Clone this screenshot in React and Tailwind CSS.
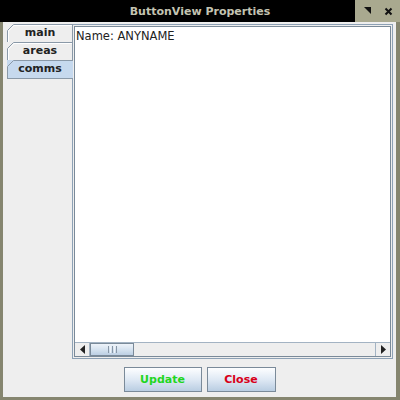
import React from "react";

const font = { fontFamily: '"DejaVu Sans", "Liberation Sans", sans-serif' };

function Tab({ label, selected, last }) {
  return (
    <div className={`relative h-[18px] w-[66px] ${selected ? "bg-[#c6d9ee]" : "bg-[#eeeeee]"}`}>
      <svg className="absolute inset-0" width="66" height="19" viewBox="0 0 66 19">
        {!selected && (
          <path d="M1.5 18 L1.5 7 L7 1.5 L65 1.5" fill="none" stroke="#ffffff" strokeWidth="1" />
        )}
        <path d="M0.5 19 L0.5 6.5 L6.5 0.5 L66 0.5" fill="none" stroke="#8a99a8" strokeWidth="1" />
        {last && <path d="M0 18.5 L66 18.5" stroke="#8a99a8" strokeWidth="1" />}
        {!selected && <path d="M65.5 0 L65.5 19" stroke="#8a99a8" strokeWidth="1" />}
      </svg>
      <div
        className="relative flex h-full items-center justify-center pt-[1px] text-[11px] font-bold text-[#222]"
        style={font}
      >
        {label}
      </div>
    </div>
  );
}

export default function App() {
  return (
    <div className="flex h-[400px] w-[400px] flex-col bg-black" style={font}>
      {/* title bar */}
      <div className="flex h-[22px] w-full items-center">
        <div className="w-[45px]" />
        <div className="flex-1 pt-[2px] text-center text-[11px] font-bold text-[#c4c4b2]">
          ButtonView Properties
        </div>
        <div className="flex h-full w-[45px] items-center bg-[#a9a98f]">
          <svg width="45" height="22" viewBox="0 0 45 22">
            <path d="M9 7 L16 7 L16 14 Z" fill="#111" />
            <path d="M30.5 8.5 L36.5 14.5 M36.5 8.5 L30.5 14.5" stroke="#111" strokeWidth="2" />
          </svg>
        </div>
      </div>

      {/* window body */}
      <div className="flex flex-1 flex-col border-b-[3px] border-l-[3px] border-r-[4px] border-[#85856f] bg-[#eeeeee]">
        <div className="flex pl-[4px] pr-[3px] pt-[2px]">
          {/* tabs */}
          <div className="flex w-[65px] flex-col">
            <Tab label="main" />
            <Tab label="areas" />
            <Tab label="comms" selected last />
          </div>
          {/* panel */}
          <div className="flex h-[335px] flex-1 flex-col border border-[#8da1b5] bg-[#eeeeee] p-[1px]">
            <div className="flex flex-1 flex-col border border-[#7a8a99] bg-white">
              <div className="flex-1 pl-[1px] pt-[1px] text-[11.5px] text-[#222]">Name: ANYNAME</div>
              <div className="flex h-[14px] border-t border-[#a3b3c3] bg-[#eeeeee]">
                <div className="flex h-full w-[15px] items-center justify-center border-r border-[#a3b3c3]">
                  <svg width="5" height="9" viewBox="0 0 5 9">
                    <path d="M5 0 L0 4.5 L5 9 Z" fill="#222" />
                  </svg>
                </div>
                <div className="flex h-full w-[44px] items-center justify-center gap-[1px] border border-[#7a8a99] bg-gradient-to-b from-[#eef3f9] via-[#d6e3f0] to-[#bccfe3]">
                  <div className="h-[7px] w-px bg-[#8796a6]" />
                  <div className="h-[7px] w-px bg-[#eef3f9]" />
                  <div className="h-[7px] w-px bg-[#8796a6]" />
                  <div className="h-[7px] w-px bg-[#eef3f9]" />
                  <div className="h-[7px] w-px bg-[#8796a6]" />
                </div>
                <div className="flex-1" />
                <div className="flex h-full w-[15px] items-center justify-center border-l border-[#a3b3c3]">
                  <svg width="5" height="9" viewBox="0 0 5 9">
                    <path d="M0 0 L5 4.5 L0 9 Z" fill="#222" />
                  </svg>
                </div>
              </div>
            </div>
          </div>
        </div>

        {/* buttons */}
        <div className="flex justify-center gap-[5px] pt-[8px]">
          <div className="flex h-[25px] w-[78px] items-center justify-center border border-[#7a8a99] bg-gradient-to-b from-[#fdfeff] via-[#dfe9f4] to-[#b9cde2] pt-[1px] text-[11px] font-bold text-[#1fd61f]">
            Update
          </div>
          <div className="flex h-[25px] w-[69px] items-center justify-center border border-[#7a8a99] bg-gradient-to-b from-[#fdfeff] via-[#dfe9f4] to-[#b9cde2] pt-[1px] text-[11px] font-bold text-[#d8001a]">
            Close
          </div>
        </div>
      </div>
    </div>
  );
}
